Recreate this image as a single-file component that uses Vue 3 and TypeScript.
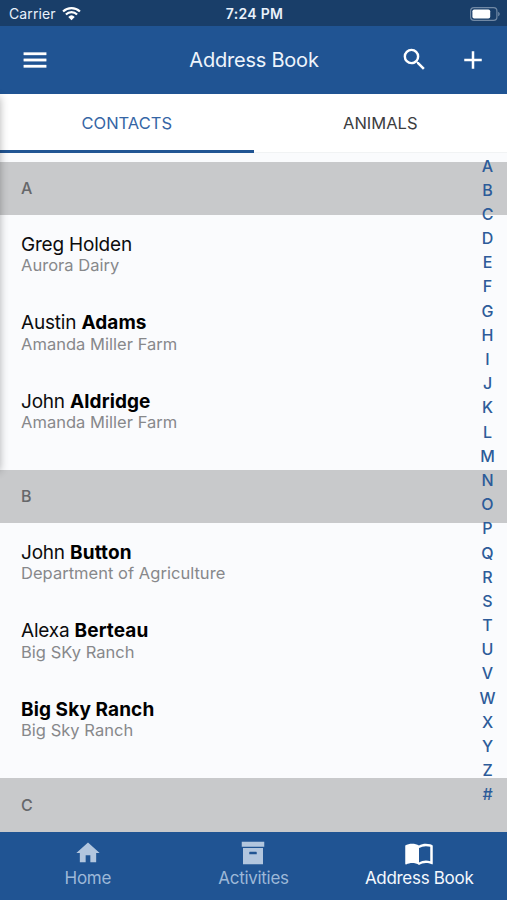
<script setup lang="ts">
interface Contact {
  first?: string
  last?: string
  org: string
}

interface Group {
  letter: string
  contacts: Contact[]
}

const groups: Group[] = [
  {
    letter: 'A',
    contacts: [
      { first: 'Greg Holden', org: 'Aurora Dairy' },
      { first: 'Austin', last: 'Adams', org: 'Amanda Miller Farm' },
      { first: 'John', last: 'Aldridge', org: 'Amanda Miller Farm' },
    ],
  },
  {
    letter: 'B',
    contacts: [
      { first: 'John', last: 'Button', org: 'Department of Agriculture' },
      { first: 'Alexa', last: 'Berteau', org: 'Big SKy Ranch' },
      { last: 'Big Sky Ranch', org: 'Big Sky Ranch' },
    ],
  },
  { letter: 'C', contacts: [] },
]

const letters: string[] = [...'ABCDEFGHIJKLMNOPQRSTUVWXYZ#']
</script>

<template>
  <div class="screen">
    <div class="status">
      <div class="carrier">
        <span>Carrier</span>
        <svg class="wifi" viewBox="0 0 18 14">
          <path d="M1 5.1a11.6 11.6 0 0 1 16 0" />
          <path d="M3.7 7.9a7.7 7.7 0 0 1 10.6 0" />
          <path class="dot" d="M5.9 10.2a4.5 4.5 0 0 1 6.2 0L9 13.4z" />
        </svg>
      </div>
      <div class="time">7:24 PM</div>
      <svg class="battery" viewBox="0 0 30 14">
        <rect class="shell" x="0.6" y="0.6" width="26.3" height="12.8" rx="3.4" />
        <rect class="level" x="2.4" y="2.4" width="17.8" height="9.2" rx="1.8" />
        <path class="tip" d="M28.2 4.7c2 .8 2 3.8 0 4.6z" />
      </svg>
    </div>

    <header class="bar">
      <svg class="icon menu" viewBox="0 0 24 24"><path d="M3 6h18v2H3V6m0 5h18v2H3v-2m0 5h18v2H3v-2z" /></svg>
      <h1>Address Book</h1>
      <div class="actions">
        <svg class="icon search" viewBox="0 0 24 24"><path d="M15.5 14h-.79l-.28-.27A6.47 6.47 0 0 0 16 9.5 6.5 6.5 0 1 0 9.5 16c1.61 0 3.09-.59 4.23-1.57l.27.28v.79l5 4.99L20.49 19l-4.99-5m-6 0a4.5 4.5 0 1 1 0-9 4.5 4.5 0 0 1 0 9z" /></svg>
        <svg class="icon" viewBox="0 0 24 24"><path d="M19 13h-6v6h-2v-6H5v-2h6V5h2v6h6v2z" /></svg>
      </div>
    </header>

    <nav class="tabs">
      <div class="tab active"><span>CONTACTS</span></div>
      <div class="tab"><span>ANIMALS</span></div>
    </nav>

    <main class="list">
      <section v-for="g in groups" :key="g.letter" class="group">
        <h2>{{ g.letter }}</h2>
        <div v-if="g.contacts.length" class="rows">
          <div v-for="(c, i) in g.contacts" :key="i" class="row">
            <div class="name"><span v-if="c.first">{{ c.first }}</span>{{ c.first && c.last ? ' ' : '' }}<b v-if="c.last">{{ c.last }}</b></div>
            <div class="org">{{ c.org }}</div>
          </div>
        </div>
      </section>
    </main>

    <footer class="bottom">
      <div class="item">
        <svg class="glyph home" viewBox="0 0 24 24"><path d="M10 20v-6h4v6h5v-8h3L12 3 2 12h3v8h5z" /></svg>
        <span>Home</span>
      </div>
      <div class="item">
        <svg class="glyph" viewBox="0 0 24 24"><path d="M3 3h18v4H3V3m1 5h16v13H4V8m5.500 3a.5.5 0 0 0-.5.5V13h6v-1.500a.5.5 0 0 0-.5-.5h-5z" /></svg>
        <span>Activities</span>
      </div>
      <div class="item current">
        <svg class="glyph book" viewBox="0 0 24 24"><path d="M21 5c-1.110-.35-2.330-.5-3.500-.5-1.950 0-4.050.4-5.500 1.500-1.450-1.100-3.550-1.500-5.500-1.500S2.450 4.900 1 6v14.650c0 .25.25.5.5.5.1 0 .15-.05.25-.05C3.100 20.450 5.050 20 6.500 20c1.950 0 4.050.4 5.500 1.500 1.350-.85 3.800-1.500 5.500-1.500 1.650 0 3.350.3 4.750 1.050.1.05.15.05.25.05.25 0 .5-.25.5-.5V6c-.6-.45-1.250-.75-2-1m0 13.500c-1.100-.35-2.300-.5-3.500-.5-1.700 0-4.150.65-5.500 1.500V8c1.350-.85 3.800-1.500 5.500-1.500 1.200 0 2.400.15 3.500.5v11.500z" /></svg>
        <span>Address Book</span>
      </div>
    </footer>

    <div class="index"><span v-for="l in letters" :key="l">{{ l }}</span></div>
    <div class="edge"></div>
  </div>
</template>

<style>
body {
  margin: 0;
}
</style>

<style scoped>
.screen {
  position: relative;
  display: flex;
  flex-direction: column;
  width: 507px;
  height: 900px;
  overflow: hidden;
  background: #fafbfd;
  font-family: Inter, "Liberation Sans", sans-serif;
}
.status {
  display: grid;
  grid-template-columns: 1fr auto 1fr;
  align-items: center;
  flex: none;
  height: 26px;
  box-sizing: border-box;
  padding: 1px 7px 0 9px;
  background: #193e69;
  color: #e9f1fb;
  font-size: 14px;
}
.carrier {
  display: flex;
  align-items: center;
  gap: 6px;
  letter-spacing: 0.1px;
}
.wifi {
  width: 19px;
  height: 15px;
  fill: none;
  stroke: #fff;
  stroke-width: 2.1;
}
.wifi .dot {
  fill: #fff;
  stroke: none;
}
.time {
  font-weight: 600;
  letter-spacing: 0.3px;
}
.battery {
  justify-self: end;
  width: 30px;
  height: 14px;
}
.shell {
  fill: none;
  stroke: #7189a5;
  stroke-width: 1.2;
}
.level {
  fill: #fff;
}
.tip {
  fill: #7189a5;
}
.bar {
  display: grid;
  grid-template-columns: 1fr auto 1fr;
  align-items: center;
  flex: none;
  height: 68px;
  box-sizing: border-box;
  padding: 0 19px 0 20px;
  background: #205493;
  color: #eef4fc;
}
.icon {
  width: 30px;
  height: 30px;
  fill: #fff;
}
.menu {
  stroke: #fff;
  stroke-width: 0.25;
}
.search {
  width: 29px;
  height: 29px;
}
h1 {
  margin: 0;
  font-size: 20px;
  font-weight: 400;
  letter-spacing: -0.22px;
}
.actions {
  display: flex;
  justify-content: flex-end;
  gap: 29px;
}
.tabs {
  display: flex;
  flex: none;
  height: 59px;
  background: #fff;
}
.tab {
  display: flex;
  align-items: center;
  justify-content: center;
  flex: 1;
  box-sizing: border-box;
  border-bottom: 1px solid #f1f3f4;
  color: #3c3d3f;
  font-size: 16.500px;
}
.tab.active {
  padding-top: 2px;
  border-bottom: 3px solid #205493;
  color: #3565a5;
}
.list {
  flex: 1;
  min-height: 0;
  padding-top: 9px;
  overflow: hidden;
}
h2 {
  display: flex;
  align-items: center;
  height: 53px;
  box-sizing: border-box;
  margin: 0;
  padding: 0 0 1px 21px;
  background: #c8c9cb;
  color: #66676a;
  font-size: 16px;
  font-weight: 500;
}
.group:last-child h2 {
  height: 54px;
}
.rows {
  height: 255px;
  box-sizing: border-box;
  padding: 17.500px 21px 0;
}
.row {
  height: 78.600px;
}
.name {
  height: 22.500px;
  color: #0c0c0d;
  font-size: 19px;
  line-height: 24px;
  letter-spacing: -0.2px;
  white-space: pre;
}
.name b {
  color: #000;
  font-weight: 700;
  letter-spacing: 0.1px;
}
.org {
  color: #87888b;
  font-size: 16.500px;
  line-height: 20px;
  letter-spacing: 0.030px;
}
.bottom {
  display: grid;
  grid-template-columns: 1fr 1fr 1fr;
  flex: none;
  height: 68px;
  box-sizing: border-box;
  padding: 6px 5px 0;
  background: #205493;
}
.item {
  display: flex;
  flex-direction: column;
  align-items: center;
  color: #9db8d8;
  font-size: 17px;
  line-height: 20px;
  letter-spacing: -0.3px;
}
.glyph {
  width: 30px;
  height: 30px;
  fill: #b2c6de;
}
.home {
  width: 28px;
  height: 28px;
  margin: 1px 0;
}
.current {
  color: #f4f8fd;
}
.current .glyph {
  fill: #fff;
}
.index {
  position: absolute;
  top: 153.500px;
  right: 9px;
  display: flex;
  flex-direction: column;
  width: 21px;
  color: #2d5b99;
  font-size: 16px;
  font-weight: 500;
  line-height: 24.190px;
  text-align: center;
}
.edge {
  position: absolute;
  top: 97px;
  left: -10px;
  width: 10px;
  height: 374px;
  box-shadow: 0 0 9px rgba(0, 0, 0, 0.3);
}
</style>
